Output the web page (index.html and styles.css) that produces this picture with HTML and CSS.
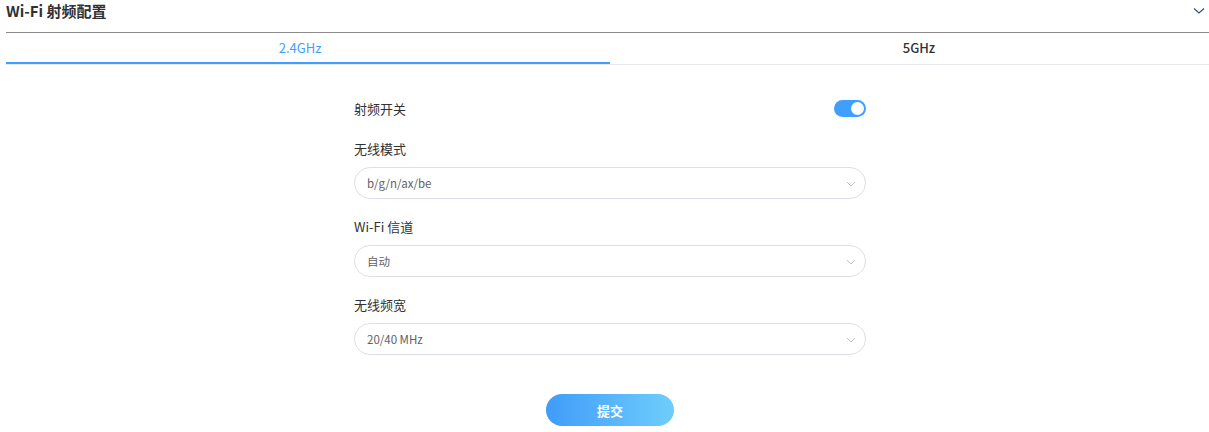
FILE: index.html
```html
<!DOCTYPE html>
<html lang="zh-CN">
<head>
<meta charset="utf-8">
<title>Wi-Fi 射频配置</title>
<link rel="stylesheet" href="styles.css">
</head>
<body>
<div class="panel">
  <div class="header">
    <div class="title">Wi-Fi 射频配置</div>
    <svg class="collapse" width="12" height="8" viewBox="0 0 12 8"><path d="M1 1.5 L6 6 L11 1.5" fill="none" stroke="#3a4a8a" stroke-width="1.2"/></svg>
  </div>
  <div class="tabs">
    <div class="tab tab-active">2.4GHz</div>
    <div class="tab tab-second">5GHz</div>
  </div>
  <div class="form">
    <div class="row-switch">
      <span class="label">射频开关</span>
      <span class="switch"><span class="knob"></span></span>
    </div>
    <div class="item">
      <div class="label">无线模式</div>
      <div class="select"><span>b/g/n/ax/be</span><svg class="arrow" width="10" height="6" viewBox="0 0 10 6"><path d="M1 1 L5 5 L9 1" fill="none" stroke="#c0c4cc" stroke-width="1"/></svg></div>
    </div>
    <div class="item">
      <div class="label">Wi-Fi 信道</div>
      <div class="select"><span>自动</span><svg class="arrow" width="10" height="6" viewBox="0 0 10 6"><path d="M1 1 L5 5 L9 1" fill="none" stroke="#c0c4cc" stroke-width="1"/></svg></div>
    </div>
    <div class="item">
      <div class="label">无线频宽</div>
      <div class="select"><span>20/40 MHz</span><svg class="arrow" width="10" height="6" viewBox="0 0 10 6"><path d="M1 1 L5 5 L9 1" fill="none" stroke="#c0c4cc" stroke-width="1"/></svg></div>
    </div>
    <div class="actions">
      <button class="submit">提交</button>
    </div>
  </div>
</div>
</body>
</html>
```
FILE: styles.css
```css
* { box-sizing: border-box; }
html, body { margin: 0; padding: 0; background: #fff; }
body {
  font-family: "Noto Sans CJK SC", "Noto Sans", sans-serif;
  color: #303133;
  overflow: hidden;
}
.panel { padding-left: 6px; width: 1209px; }
.header {
  height: 33px;
  display: flex;
  align-items: flex-start;
  justify-content: space-between;
  border-bottom: 1px solid #8c8c8c;
}
.title {
  font-size: 15px;
  font-weight: 700;
  line-height: 22px;
  color: #303133;
}
.collapse { margin-top: 7px; margin-right: 4px; }
.tabs {
  display: flex;
  height: 32px;
  border-bottom: 1px solid #e6e9ef;
}
.tab {
  font-size: 13px;
  line-height: 29px;
  text-align: center;
  color: #303133;
}
.tab-active {
  width: 604px;
  padding-right: 16px;
  color: #409eff;
  border-bottom: 2px solid #409eff;
}
.tab-second {
  flex: 1;
  padding-left: 19px;
  font-weight: 500;
}
.form {
  width: 512px;
  margin-left: 348px;
  padding-top: 34px;
}
.row-switch {
  height: 19px;
  display: flex;
  align-items: center;
  justify-content: space-between;
}
.label {
  font-size: 13px;
  line-height: 18px;
  color: #303133;
}
.switch {
  width: 32px;
  height: 17px;
  border-radius: 9px;
  background: #409eff;
  position: relative;
}
.knob {
  position: absolute;
  right: 2px;
  top: 2px;
  width: 13px;
  height: 13px;
  border-radius: 50%;
  background: #fff;
}
.item { margin-top: 22px; }
.item + .item { margin-top: 19px; }
.item .label { margin-bottom: 9px; }
.select {
  height: 32px;
  border: 1px solid #dcdfe6;
  border-radius: 16px;
  display: flex;
  align-items: center;
  justify-content: space-between;
  padding: 0 9px 0 12px;
  font-size: 11.5px;
  color: #606266;
}
.arrow { margin-top: 1px; }
.actions {
  display: flex;
  justify-content: center;
  margin-top: 39px;
}
.submit {
  width: 128px;
  height: 32px;
  border: none;
  border-radius: 16px;
  background: linear-gradient(90deg, #3f9cf9 0%, #6fcdfc 100%);
  color: #fff;
  font-family: "Noto Sans CJK SC", sans-serif;
  font-size: 13px;
  font-weight: 700;
  padding: 0;
}
```
